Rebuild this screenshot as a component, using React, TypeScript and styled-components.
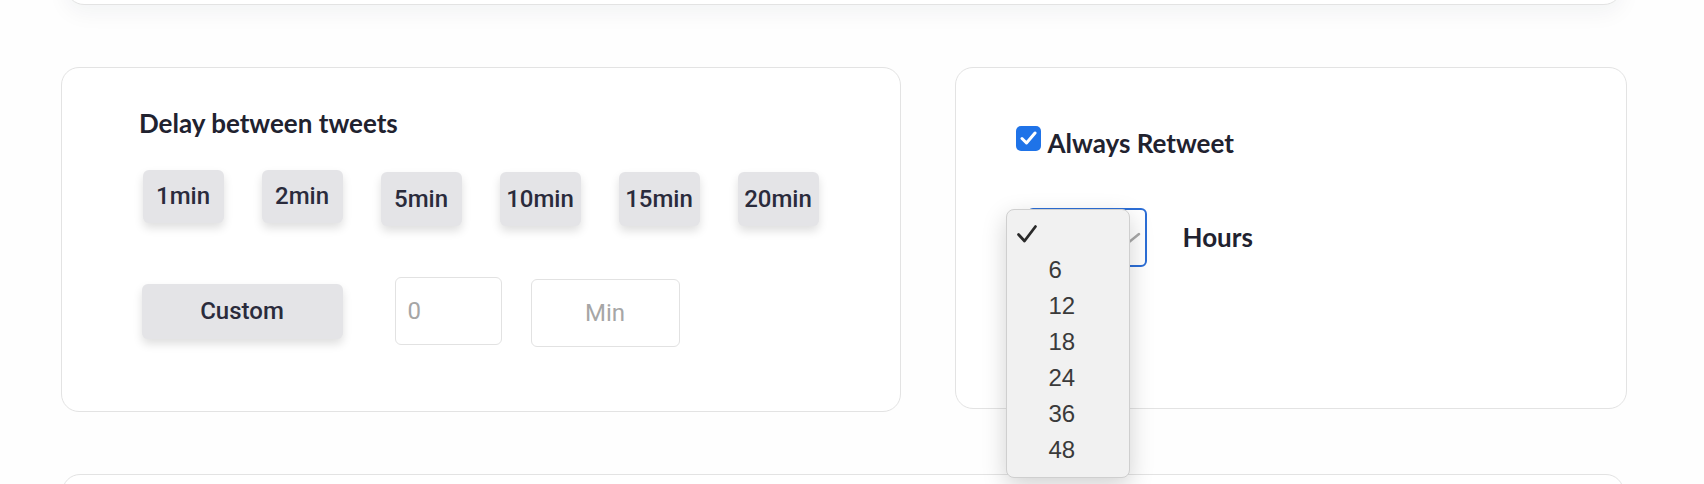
import React from "react";
import styled, { createGlobalStyle } from "styled-components";

const GlobalStyle = createGlobalStyle`
  html, body { margin: 0; padding: 0; background: #fefefe; }
  body { font-family: Lato, "Noto Sans", sans-serif; }
  * { box-sizing: border-box; }
`;

const Page = styled.div`
  width: 1704px;
  height: 484px;
  overflow: hidden;
  display: flex;
  flex-direction: column;
  & > * {
    flex-shrink: 0;
  }
`;

const TopCard = styled.div`
  width: 1556px;
  height: 80px;
  margin-top: -75px;
  margin-left: 66px;
  background: #fff;
  border: 1.5px solid #e3e3e3;
  border-radius: 18px;
  box-shadow: 0 8px 22px rgba(20, 30, 60, 0.05);
`;

const Row = styled.div`
  display: flex;
  align-items: flex-start;
  gap: 54px;
  margin-top: 62px;
  margin-left: 61px;
`;

const Card = styled.div<{ $w: number; $h: number }>`
  width: ${(p) => p.$w}px;
  height: ${(p) => p.$h}px;
  background: #fff;
  border: 1.5px solid #e3e3e3;
  border-radius: 18px;
  position: relative;
  flex-shrink: 0;
`;

const LeftCard = styled(Card)`
  padding: 38.5px 0 0 77px;
`;

const RightCard = styled(Card)`
  padding: 57px 0 0 59.5px;
`;

const BottomCard = styled.div`
  width: 1562px;
  height: 100px;
  margin-top: 62px;
  margin-left: 62px;
  background: #fff;
  border: 1.5px solid #e3e3e3;
  border-radius: 18px;
`;

const Title = styled.h3`
  margin: 0;
  font-family: Lato, sans-serif;
  font-weight: 700;
  font-size: 26px;
  line-height: 32px;
  color: #21222f;
`;

const ButtonRow = styled.div`
  display: flex;
  align-items: flex-start;
  gap: 38px;
  margin: 31px 0 0 3.5px;
`;

const DelayButton = styled.button<{ $drop?: number; $w?: number; $h?: number }>`
  width: ${(p) => p.$w ?? 81}px;
  height: ${(p) => p.$h ?? 53}px;
  margin-top: ${(p) => p.$drop ?? 0}px;
  border: none;
  border-radius: 6px;
  background: #e4e4e7;
  box-shadow: 0 5px 10px rgba(0, 0, 0, 0.13);
  font-family: Roboto, sans-serif;
  font-weight: 500;
  font-size: 24px;
  color: #2a2b3c;
  padding: 0;
  display: flex;
  align-items: center;
  justify-content: center;
  flex-shrink: 0;
`;

const CustomRow = styled.div`
  display: flex;
  align-items: flex-start;
  margin: 51px 0 0 2.5px;
`;

const NumInput = styled.input<{ $w: number; $drop?: number; $gap: number; $center?: boolean }>`
  width: ${(p) => p.$w}px;
  height: 68px;
  margin-top: ${(p) => p.$drop ?? 0}px;
  margin-left: ${(p) => p.$gap}px;
  border: 1.5px solid #e2e2e2;
  border-radius: 6px;
  background: #fff;
  outline: none;
  padding: 0 0 0 ${(p) => (p.$center ? 0 : 12)}px;
  text-align: ${(p) => (p.$center ? "center" : "left")};
  font-family: Roboto, sans-serif;
  font-size: 24px;
  color: #333;
  &::placeholder {
    color: #a6a6a6;
  }
`;

const CheckRow = styled.label`
  display: flex;
  align-items: flex-start;
  gap: 7px;
  font-family: Lato, sans-serif;
  font-weight: 700;
  font-size: 26px;
  line-height: 36px;
  color: #21222f;
`;

const CheckBox = styled.span`
  width: 25px;
  height: 25px;
  margin-top: 0.5px;
  border-radius: 5px;
  background: #1f73e8;
  display: flex;
  align-items: center;
  justify-content: center;
  flex-shrink: 0;
`;

const SelectRow = styled.div`
  display: flex;
  align-items: center;
  gap: 36px;
  margin: 46.5px 0 0 11px;
`;

const SelectWrap = styled.div`
  position: relative;
  width: 120px;
  height: 59px;
`;

const SelectBox = styled.div`
  width: 120px;
  height: 59px;
  border: 2px solid #2c6ed6;
  border-radius: 6px;
  background: #fff;
`;

const Chevron = styled.svg`
  position: absolute;
  left: 88px;
  top: 24px;
`;

const HoursLabel = styled.span`
  font-family: Lato, sans-serif;
  font-weight: 700;
  font-size: 26px;
  line-height: 32px;
  color: #21222f;
  margin-top: -1px;
`;

const Menu = styled.ul`
  position: absolute;
  left: -21px;
  top: 1px;
  width: 124px;
  height: 269px;
  margin: 0;
  padding: 6px 0 0 0;
  list-style: none;
  background: #f1f1f1;
  border: 1px solid #cfcfcf;
  border-radius: 8px;
  box-shadow: 0 8px 24px rgba(0, 0, 0, 0.18);
  z-index: 5;
`;

const MenuItem = styled.li`
  position: relative;
  height: 36px;
  padding-left: 42px;
  display: flex;
  align-items: center;
  font-family: "Liberation Sans", Arial, sans-serif;
  font-size: 24px;
  color: #3a3a3a;
`;

const MenuCheck = styled.svg`
  position: absolute;
  left: 9px;
  top: 8px;
`;

const delays = [
  { label: "1min", drop: 0 },
  { label: "2min", drop: 0 },
  { label: "5min", drop: 2 },
  { label: "10min", drop: 2 },
  { label: "15min", drop: 2 },
  { label: "20min", drop: 2 },
];

const hours = ["", "6", "12", "18", "24", "36", "48"];

export default function App() {
  return (
    <>
      <GlobalStyle />
      <Page>
        <TopCard />
        <Row>
          <LeftCard $w={840} $h={345}>
            <Title>Delay between tweets</Title>
            <ButtonRow>
              {delays.map((d) => (
                <DelayButton key={d.label} $drop={d.drop} $h={d.drop ? 54 : 53}>
                  {d.label}
                </DelayButton>
              ))}
            </ButtonRow>
            <CustomRow>
              <DelayButton $w={201} $h={55} $drop={7}>
                Custom
              </DelayButton>
              <NumInput $w={107} $gap={52} placeholder="0" />
              <NumInput $w={149} $gap={29} $drop={2} $center placeholder="Min" />
            </CustomRow>
          </LeftCard>
          <RightCard $w={672} $h={342}>
            <CheckRow>
              <CheckBox>
                <svg width="17" height="14" viewBox="0 0 17 14">
                  <path d="M2 7.5 L6.5 12 L15 2" fill="none" stroke="#fff" strokeWidth="3" strokeLinecap="round" strokeLinejoin="round" />
                </svg>
              </CheckBox>
              Always Retweet
            </CheckRow>
            <SelectRow>
              <SelectWrap>
                <SelectBox />
                <Chevron width="26" height="14" viewBox="0 0 26 14">
                  <path d="M2 2 L13 11 L24 2" fill="none" stroke="#a9a9a9" strokeWidth="2.5" strokeLinecap="round" />
                </Chevron>
                <Menu>
                  {hours.map((h, i) => (
                    <MenuItem key={i}>
                      {i === 0 && (
                        <MenuCheck width="22" height="20" viewBox="0 0 22 20">
                          <path d="M2.5 10.5 L8.5 17 L19.5 2.5" fill="none" stroke="#2a2a2a" strokeWidth="2.8" strokeLinecap="round" strokeLinejoin="round" />
                        </MenuCheck>
                      )}
                      {h}
                    </MenuItem>
                  ))}
                </Menu>
              </SelectWrap>
              <HoursLabel>Hours</HoursLabel>
            </SelectRow>
          </RightCard>
        </Row>
        <BottomCard />
      </Page>
    </>
  );
}
